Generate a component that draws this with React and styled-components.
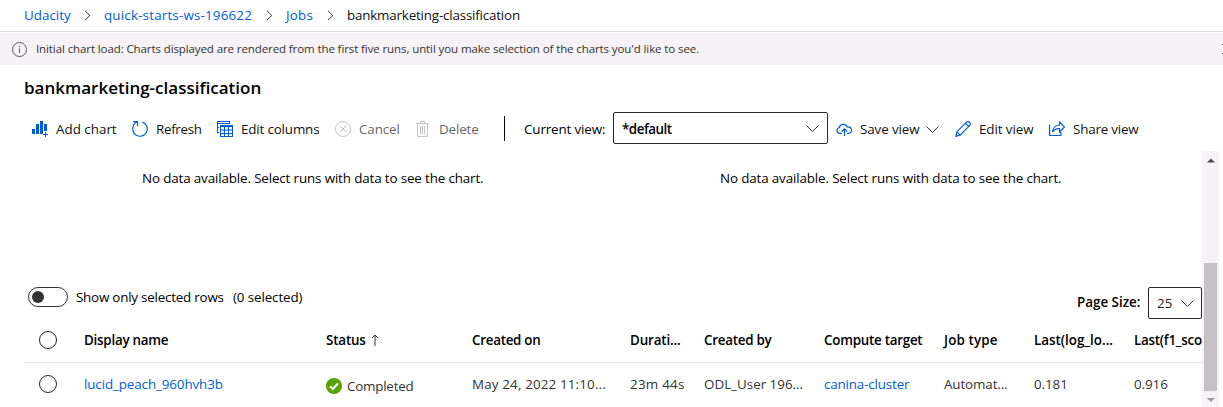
import React from 'react';
import styled, { createGlobalStyle } from 'styled-components';

const Global = createGlobalStyle`
  * { box-sizing: border-box; }
  body {
    margin: 0;
    background: #fff;
    color: #000;
    font: 13.4px/20px "Open Sans", "Noto Sans", sans-serif;
    overflow: hidden;
  }
  svg { display: block; flex: none; }
`;

const blue = '#015cda';

const Page = styled.div`
  height: 407px;
  display: flex;
  flex-direction: column;
  overflow: hidden;
`;

const Text = styled.span`
  display: block;
  flex: none;
  white-space: nowrap;
  width: ${(p) => (p.$w ? `${p.$w}px` : 'auto')};
  letter-spacing: ${(p) => p.$ls || 0}px;
  font-weight: ${(p) => (p.$bold ? 600 : 400)};
`;

const Breadcrumb = styled.nav`
  height: 32px;
  flex: none;
  display: flex;
  align-items: center;
  padding: 0 0 1px 24px;
  border-bottom: 1px solid #dadada;
`;

const Crumb = styled(Text)`
  color: ${(p) => (p.$current ? '#111' : blue)};
`;

const CrumbSeparator = styled.div`
  width: 34px;
  flex: none;
  display: flex;
  justify-content: center;
`;

const Notice = styled.div`
  height: 32px;
  margin-top: 1px;
  flex: none;
  display: flex;
  align-items: center;
  justify-content: space-between;
  padding-left: 12px;
  background: #f6f2f6;
  color: #333;
  font-size: 11.5px;
  overflow: hidden;
`;

const NoticeMessage = styled.div`
  display: flex;
  align-items: center;
  gap: 9px;
`;

const NoticeClose = styled.div`
  width: 1px;
  overflow: hidden;
`;

const Title = styled.h1`
  margin: 11px 0 0 24px;
  height: 24px;
  flex: none;
  font-size: 17px;
  line-height: 24px;
  font-weight: 600;
  letter-spacing: 0;
`;

const Toolbar = styled.div`
  height: 32px;
  margin-top: 12px;
  padding-left: 32px;
  flex: none;
  display: flex;
  align-items: center;
`;

const Commands = styled.div`
  display: flex;
  gap: 16px;
  padding-top: 2px;
`;

const ToolButton = styled.button`
  display: flex;
  align-items: center;
  gap: 8px;
  padding: 0;
  border: 0;
  background: none;
  font: inherit;
  color: ${(p) => (p.$disabled ? '#666' : '#111')};
  & > svg { color: ${(p) => (p.$disabled ? '#c4c4c4' : blue)}; }
`;

const Divider = styled.div`
  width: 1px;
  height: 25px;
  margin: 0 19px 0 26px;
  background: #000;
`;

const ViewLabel = styled(Text)`
  padding-top: 2px;
`;

const ViewSelect = styled.div`
  width: 215px;
  height: 32px;
  margin: 0 8px;
  padding: 1px 8px 0;
  display: flex;
  align-items: center;
  justify-content: space-between;
  border: 1px solid #292827;
  border-radius: 2px;
`;

const SaveGroup = styled.div`
  display: flex;
  align-items: center;
  gap: 8px;
`;

const Body = styled.div`
  flex: 1;
  margin-top: 7px;
  min-height: 0;
  display: flex;
`;

const Content = styled.main`
  width: 1202px;
  flex: none;
  overflow: hidden;
`;

const Charts = styled.section`
  display: flex;
  height: 136px;
  padding: 17px 0 0 24px;
`;

const EmptyChart = styled.div`
  width: 578px;
  flex: none;
  padding-left: 118px;
`;

const GridControls = styled.div`
  height: 32px;
  padding-left: 28px;
  display: flex;
  justify-content: space-between;
`;

const ToggleGroup = styled.div`
  height: 20px;
  display: flex;
  align-items: center;
  gap: 8px;
`;

const Toggle = styled.div`
  width: 40px;
  height: 20px;
  padding: 0 3px;
  display: flex;
  align-items: center;
  border: 1px solid #333;
  border-radius: 10px;
`;

const Knob = styled.div`
  width: 12px;
  height: 12px;
  border-radius: 50%;
  background: #333;
`;

const Paging = styled.div`
  display: flex;
  align-items: center;
  gap: 8px;
`;

const PagingLabel = styled(Text)`
  padding-bottom: 2px;
`;

const PageSelect = styled.div`
  width: 54px;
  height: 32px;
  padding: 0 7px 0 8px;
  display: flex;
  align-items: center;
  justify-content: space-between;
  border: 1px solid #292827;
  border-radius: 2px;
  color: #222;
`;

const GridRow = styled.div`
  height: ${(p) => (p.$head ? 44 : 43)}px;
  margin-left: 24px;
  padding: 0 0 ${(p) => (p.$head ? 1 : 2)}px 15px;
  display: grid;
  grid-template-columns: 45px 242px 146px 158px 74px 120px 120px 90px 100px 100px;
  align-items: center;
  color: ${(p) => (p.$head ? '#000' : '#333')};
  border-bottom: ${(p) => (p.$head ? '1px solid #e9e9e9' : '0')};
`;

const Select = styled.div`
  width: 18px;
  height: 18px;
  border: 1px solid #222;
  border-radius: 50%;
`;

const CellLink = styled(Text)`
  color: ${blue};
`;

const StatusCell = styled.div`
  display: flex;
  align-items: center;
  gap: ${(p) => p.$gap}px;
  padding-top: ${(p) => p.$drop || 0}px;
`;

const Scrollbar = styled.div`
  width: 17px;
  flex: none;
  display: flex;
  flex-direction: column;
  align-items: center;
  justify-content: space-between;
  padding: 7px 0 4px;
  background: #f6f2f6;
`;

const Thumb = styled.div`
  width: 13px;
  height: 128px;
  margin: auto 0 7px;
  background: #c3c1c4;
`;

const Icon = ({ children, w = 16, h = 16, color = 'currentColor' }) => (
  <svg width={w} height={h} viewBox={`0 0 ${w} ${h}`} fill="none" stroke={color} strokeWidth="1">
    {children}
  </svg>
);

const ChevronDown = () => (
  <Icon w={13} h={7} color="#333"><path d="M.5.5l6 6 6-6" /></Icon>
);
const ChevronRight = () => (
  <Icon w={7} h={11} color="#333"><path d="M1 .8l4.8 4.7L1 10.2" /></Icon>
);
const AddChartIcon = () => (
  <Icon>
    <path fill="currentColor" stroke="none" d="M0 8h3v5H0zM4 3h3v10H4zM8 0h3v13H8zM12 3h3v7h-3z" />
    <path d="M13.5 11v5M11 13.5h5" />
  </Icon>
);
const RefreshIcon = () => (
  <Icon><path strokeWidth="1.2" d="M1.2.6h4.3v4.3M5.4.7C2.5 1.8.7 4.500.7 8a7.300 7.300 0 1 0 9.500-7" /></Icon>
);
const ColumnsIcon = () => (
  <Icon>
    <path strokeWidth="1.1" d="M.5 0v12M0 .5h13M12.5 0v3M0 2.500h13M0 6.500h2M0 11.500h2" />
    <path strokeWidth="1.1" d="M3.500 4.500h12v11h-12zM3.500 5.500h12M3.500 9h12M3.500 12.500h12M7.500 5v11M11.500 5v11" />
  </Icon>
);
const CancelIcon = () => (
  <Icon><circle cx="8" cy="8" r="7.500" /><path d="M5 5l6 6M11 5l-6 6" /></Icon>
);
const TrashIcon = () => (
  <Icon><path d="M1 2.500h13M5.500 2V.5h4V2M2.500 3v12.500h10V3M5.500 5v8M7.500 5v8M9.500 5v8" /></Icon>
);
const CloudIcon = () => (
  <Icon>
    <path strokeWidth="1.200" d="M6 12.400H3.500A3 3 0 0 1 3.400 6.500C3.800 2.800 9.500 2 11 5.800c5.500-.3 6 6 1.500 6.600H11M8.500 15V8M5.800 10.500L8.500 7.800l2.700 2.700" />
  </Icon>
);
const PencilIcon = () => (
  <Icon><path strokeWidth="1.100" d="M.7 15.300l1.200-4.600L12 .8q1.500-.6 2.600.6t.6 2.600L5.200 14.200zM10.500 2.300l3.200 3.200M1.900 10.800l3.300 3.300" /></Icon>
);
const ShareIcon = () => (
  <Icon><path strokeWidth="1.200" d="M.6 3.500v11h11.300V11M10.500 1v3C6.500 4.300 4 7 3.600 11c1.700-2.500 4-3.500 6.900-3.300V11l5-5z" /></Icon>
);
const InfoIcon = () => (
  <Icon w={15} h={15} color="#555"><circle cx="7.500" cy="7.500" r="7" /><path d="M7.500 6.500V11M7.500 4v1.200" /></Icon>
);
const SortIcon = () => (
  <Icon w={8} h={12} color="#333"><path d="M4 12V1M1 4l3-3 3 3" /></Icon>
);
const DoneIcon = () => (
  <Icon><circle cx="8" cy="8" r="8" fill="#57a300" stroke="none" /><path stroke="#fff" strokeWidth="2" d="M4 8.200l2.800 2.800 5.200-5.700" /></Icon>
);

const ScrollArrow = ({ down }) => (
  <svg width="8" height="5" viewBox="0 0 8 5">
    <path d={down ? 'M0 0h8L4 4z' : 'M0 4.500h8L4 .5z'} fill={down ? '#9b999c' : '#4c4a4d'} />
  </svg>
);

export default function App() {
  const empty = 'No data available. Select runs with data to see the chart.';
  return (
    <Page>
      <Global />
      <Breadcrumb>
        <Crumb $w={46}>Udacity</Crumb>
        <CrumbSeparator><ChevronRight /></CrumbSeparator>
        <Crumb $w={148} $ls={0.18}>quick-starts-ws-196622</Crumb>
        <CrumbSeparator><ChevronRight /></CrumbSeparator>
        <Crumb $w={27} $ls={0.2}>Jobs</Crumb>
        <CrumbSeparator><ChevronRight /></CrumbSeparator>
        <Crumb $current $ls={-0.19}>bankmarketing-classification</Crumb>
      </Breadcrumb>
      <Notice>
        <NoticeMessage>
          <InfoIcon />
          <Text $ls={-0.1}>
            Initial chart load: Charts displayed are rendered from the first five runs, until you make selection of the charts you'd like to see.
          </Text>
        </NoticeMessage>
        <NoticeClose><Icon w={10} h={10} color="#333"><path d="M0 0l10 10M10 0L0 10" /></Icon></NoticeClose>
      </Notice>
      <Title>bankmarketing-classification</Title>
      <Toolbar>
        <Commands>
          <ToolButton><AddChartIcon /><Text $w={60}>Add chart</Text></ToolButton>
          <ToolButton><RefreshIcon /><Text $w={45} $ls={-0.32}>Refresh</Text></ToolButton>
          <ToolButton><ColumnsIcon /><Text $w={78} $ls={-0.16}>Edit columns</Text></ToolButton>
          <ToolButton $disabled><CancelIcon /><Text $w={40} $ls={-0.12}>Cancel</Text></ToolButton>
          <ToolButton $disabled><TrashIcon /><Text $w={39} $ls={-0.13}>Delete</Text></ToolButton>
        </Commands>
        <Divider />
        <ViewLabel $w={81} $ls={-0.13}>Current view:</ViewLabel>
        <ViewSelect>
          <Text $bold $ls={-0.5}>*default</Text>
          <ChevronDown />
        </ViewSelect>
        <Commands>
          <SaveGroup>
            <ToolButton><CloudIcon /><Text $w={58} $ls={-0.1}>Save view</Text></ToolButton>
            <ChevronDown />
          </SaveGroup>
          <ToolButton><PencilIcon /><Text $w={54} $ls={-0.08}>Edit view</Text></ToolButton>
          <ToolButton><ShareIcon /><Text $w={65} $ls={-0.2}>Share view</Text></ToolButton>
        </Commands>
      </Toolbar>
      <Body>
        <Content>
          <Charts>
            <EmptyChart><Text $ls={-0.14}>{empty}</Text></EmptyChart>
            <EmptyChart><Text $ls={-0.14}>{empty}</Text></EmptyChart>
          </Charts>
          <GridControls>
            <ToggleGroup>
              <Toggle><Knob /></Toggle>
              <Text $w={149} $ls={-0.22}>Show only selected rows</Text>
              <Text $ls={-0.11}>(0 selected)</Text>
            </ToggleGroup>
            <Paging>
              <PagingLabel $bold $w={63}>Page Size:</PagingLabel>
              <PageSelect><Text>25</Text><ChevronDown /></PageSelect>
            </Paging>
          </GridControls>
          <GridRow $head>
            <Select />
            <Text $bold $ls={-0.25}>Display name</Text>
            <StatusCell $gap={5}><Text $bold $w={40} $ls={-0.18}>Status</Text><SortIcon /></StatusCell>
            <Text $bold $ls={-0.28}>Created on</Text>
            <Text $bold $ls={-0.15}>Durati...</Text>
            <Text $bold $ls={-0.27}>Created by</Text>
            <Text $bold $ls={-0.26}>Compute target</Text>
            <Text $bold $ls={0.13}>Job type</Text>
            <Text $bold>Last(log_lo...</Text>
            <Text $bold $ls={-0.25}>Last(f1_sco</Text>
          </GridRow>
          <GridRow>
            <Select />
            <CellLink $ls={-0.11}>lucid_peach_960hvh3b</CellLink>
            <StatusCell $gap={5} $drop={4}><DoneIcon /><Text $ls={-0.22}>Completed</Text></StatusCell>
            <Text $ls={0.15}>May 24, 2022 11:10...</Text>
            <Text $ls={0.24}>23m 44s</Text>
            <Text>ODL_User 196...</Text>
            <CellLink $ls={-0.16}>canina-cluster</CellLink>
            <Text $ls={-0.12}>Automat...</Text>
            <Text $ls={-0.08}>0.181</Text>
            <Text $ls={-0.08}>0.916</Text>
          </GridRow>
        </Content>
        <Scrollbar>
          <ScrollArrow />
          <Thumb />
          <ScrollArrow down />
        </Scrollbar>
      </Body>
    </Page>
  );
}
